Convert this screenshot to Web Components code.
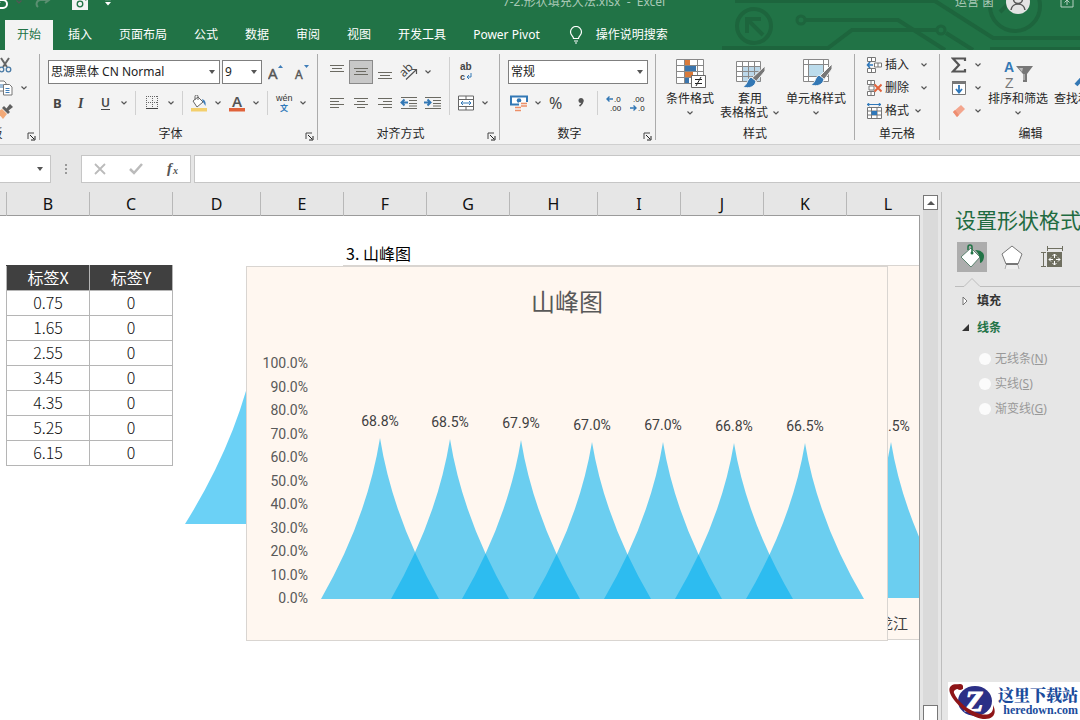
<!DOCTYPE html>
<html lang="zh-CN">
<head>
<meta charset="utf-8">
<title>7-2.形状填充大法.xlsx - Excel</title>
<style>
    body {
        margin: 0;
        height: 100vh;
        overflow: hidden;
        background: #e6e6e6;
        color: #262626;
        font: 12px/14px "Noto Sans", "Noto Sans CJK SC", sans-serif;
    }
</style>
</head>
<body>
<excel-app></excel-app>

<script>
// icon name -> [width, height, svg content]
const ICONS = {
    chevron: [8, 6, '<path d="M1.500 1.500 4 4l2.500-2.500" fill="none" stroke="#555" stroke-width="1.200"/>'],
    caret: [8, 6, '<path d="M1 1h6L4 5z" fill="#555"/>'],
    launcher: [9, 9, '<path d="M1 7V1h6" fill="none" stroke="#444"/><path d="M3 3l4 4M8 4v4H4" fill="none" stroke="#222"/>'],
    undo: [14, 14, '<path d="M4 1 1 5l4 3M2 5h6a4 4 0 0 1 0 8H5" fill="none" stroke="#fff" stroke-width="2"/>'],
    redo: [16, 14, '<path d="M11 1l3 4-4 3M14 5H6a4 4 0 0 0-3 7" fill="none" stroke="#5b8f71" stroke-width="2"/>'],
    camera: [16, 16, '<path d="M0 3h4l1-2h6l1 2h4v13H0z" fill="#f4f4f4"/><circle cx="8" cy="10" r="2.800" fill="none" stroke="#217346" stroke-width="1.300"/><path d="M13 6h1.500" stroke="#217346"/>'],
    customize: [8, 9, '<path d="M1 1.500h6" stroke="#fff" stroke-width="1.300"/><path d="M1 4h6L4 7.500z" fill="#fff"/>'],
    avatar: [24, 24, '<circle cx="12" cy="12" r="12" fill="#e3e3e3"/><circle cx="12" cy="9" r="4.500" fill="none" stroke="#555" stroke-width="1.500"/><path d="M5 20c1-8 13-8 14 0" fill="none" stroke="#555" stroke-width="1.500"/>'],
    ribbonMode: [14, 12, '<path d="M1 1h12v10H1zM7 9V4M4.500 6.500 7 4l2.500 2.500" fill="none" stroke="#b5d1c0"/>'],
    bulb: [14, 18, '<path d="M4.500 12.500c0-2.500-3-3-3-6.500a5.500 5.500 0 0 1 11 0c0 3.500-3 4-3 6.500zM5 15h4M6 17h2" fill="none" stroke="#fff" stroke-width="1.200"/>'],
    cut: [14, 16, '<path d="M3 1l6 9M11 1 5 10" stroke="#666" stroke-width="2"/><circle cx="3.500" cy="12.500" r="2.300" fill="none" stroke="#4a7ba6" stroke-width="1.300"/><circle cx="10.500" cy="12.500" r="2.300" fill="none" stroke="#4a7ba6" stroke-width="1.300"/>'],
    copy: [16, 16, '<path d="M1 1h6l2 2v8H1z" fill="#fff" stroke="#777"/><path d="M6.500 4.500h6l2.500 2.500v8H6.500z" fill="#fff" stroke="#777"/><path d="M3 5h3M3 7h3M8.500 8.500h4M8.500 10.500h4M8.500 12.500h4" stroke="#3f7db8"/>'],
    painter: [16, 16, '<path d="M0 9l5-3 5 5-4 5z" fill="#f2a977"/><path d="M5 5l2-2 6 6-2 2z" fill="#5f5f5f"/><path d="M9 6l4-5 3 3-5 4z" fill="#5f5f5f"/>'],
    grow: [16, 16, '<text x="0" y="15" font-family="Noto Sans" font-size="15" fill="#555" stroke="#555" stroke-width=".4">A</text><path d="M10 4h5l-2.500-3z" fill="#3f7db8"/>'],
    shrink: [16, 16, '<text x="1" y="15" font-family="Noto Sans" font-size="12" fill="#555" stroke="#555" stroke-width=".4">A</text><path d="M10 1h5l-2.500 3z" fill="#3f7db8"/>'],
    bold: [12, 14, '<text x="2" y="12" font-family="Noto Sans" font-weight="700" font-size="13" fill="#444">B</text>'],
    italic: [12, 14, '<text x="3" y="12" font-family="Liberation Serif" font-style="italic" font-weight="700" font-size="14" fill="#444">I</text>'],
    underline: [12, 16, '<text x="2" y="12" font-family="Noto Sans" font-weight="600" font-size="12" fill="#444">U</text><path d="M2 14.500h9" stroke="#444"/>'],
    borders: [14, 14, '<path d="M1.500 0v12M7.500 0v12M12.500 0v12M1 .5h12M1 6.500h12" stroke="#666" stroke-dasharray="1 1" fill="none"/><path d="M1 12.500h12" stroke="#444"/>'],
    fill: [18, 17, '<path d="M3 6l5-4 5 5-6 5z" fill="#fff" stroke="#666"/><path d="M5 5V1.500a1.500 1.500 0 0 1 3 0V5" fill="none" stroke="#666"/><path d="M12 4c3 1 4 3 3.500 7L13 7z" fill="#3f7db8"/><path d="M1 13h16v3.500H1z" fill="#f3cf6c"/>'],
    fontColor: [18, 17, '<text x="4" y="12" font-family="Noto Sans" font-weight="600" font-size="15" fill="#555">A</text><path d="M1 13h16v3.500H1z" fill="#e0623a"/>'],
    phonetic: [18, 20, '<text x="1" y="8" font-family="Liberation Sans" font-size="9" fill="#333">wén</text><text x="5" y="18" font-family="Noto Sans CJK SC" font-weight="700" font-size="8" fill="#2f78ba">文</text>'],
    alignTop: [16, 16, '<path d="M1 1.500h14M3 4.500h10M1 7.500h14" stroke="#6b6a62"/>'],
    alignMiddle: [16, 16, '<path d="M1 4.500h14M3 7.500h10M1 10.500h14" stroke="#6b6a62"/>'],
    alignBottom: [16, 16, '<path d="M1 8.500h14M3 11.500h10M1 14.500h14" stroke="#6b6a62"/>'],
    alignLeft: [16, 16, '<path d="M1 3.500h14M1 6.500h9M1 9.500h14M1 12.500h9" stroke="#6b6a62"/>'],
    alignCenter: [16, 16, '<path d="M1 3.500h14M4 6.500h8M1 9.500h14M4 12.500h8" stroke="#6b6a62"/>'],
    alignRight: [16, 16, '<path d="M1 3.500h14M6 6.500h9M1 9.500h14M6 12.500h9" stroke="#6b6a62"/>'],
    orient: [18, 18, '<text transform="rotate(-45 8 9)" x="1" y="10" font-family="Noto Sans" font-size="12" fill="#444">ab</text><path d="M6 16.500 16 7M12 6.500h4.500V11" fill="none" stroke="#555" stroke-width="1.200"/>'],
    outdent: [18, 16, '<path d="M1 2.500h16M9 5.500h8M9 8.500h8M1 13.500h16M9 11h8" stroke="#6b6a62"/><path d="M8 7.500H2M4.500 4.500l-3 3 3 3" fill="none" stroke="#3378b5" stroke-width="2"/>'],
    indent: [18, 16, '<path d="M1 2.500h16M9 5.500h8M9 8.500h8M1 13.500h16M9 11h8" stroke="#6b6a62"/><path d="M0 7.500h6M3.500 4.500l3 3-3 3" fill="none" stroke="#3378b5" stroke-width="2"/>'],
    wrap: [14, 20, '<text x="1" y="8" font-family="Liberation Sans" font-weight="700" font-size="10" fill="#444">ab</text><text x="1" y="18" font-family="Liberation Sans" font-weight="700" font-size="9" fill="#444">c</text><path d="M12 11v4H8M10 13l-2 2 2 2" fill="none" stroke="#3378b5"/>'],
    merge: [16, 16, '<path d="M.5 1h15v14H.5zM.5 4.500h15M.5 11.500h15M8 1v3.500M8 11.500V15" fill="#fff" stroke="#666"/><path d="M3 8h10M5 6 3 8l2 2M11 6l2 2-2 2" fill="none" stroke="#3378b5"/>'],
    currency: [18, 17, '<path d="M1 1.500h16v8H1z" fill="#fff" stroke="#3378b5" stroke-width="2"/><circle cx="9" cy="5.500" r="2.300" fill="#3378b5"/><path d="M9 7h9v5H9zM4 11h8v6H4z" fill="#f6f6f6"/><path d="M11 8.500h6M11 11h6M5 12.500h6M5 15.500h6" stroke="#ec8f68" stroke-width="1.600"/>'],
    percent: [16, 16, '<text x="0" y="14" font-family="Noto Sans" font-size="16" fill="#444">%</text>'],
    comma: [10, 16, '<circle cx="5" cy="5.500" r="2.500" fill="#555"/><path d="M6.500 5c.500 3-1 4.500-3 6" fill="none" stroke="#555" stroke-width="1.800"/>'],
    moreDigits: [18, 18, '<text x="9" y="8" font-family="Liberation Sans" font-size="8" fill="#222">.0</text><text x="5" y="17" font-family="Liberation Sans" font-size="8" fill="#222">.00</text><path d="M8 5H2M4.500 2.500 2 5l2.500 2.500" fill="none" stroke="#3378b5" stroke-width="1.400"/>'],
    lessDigits: [18, 18, '<text x="4" y="8" font-family="Liberation Sans" font-size="8" fill="#222">.00</text><text x="9" y="17" font-family="Liberation Sans" font-size="8" fill="#222">.0</text><path d="M1 14h6M4.500 11.500 7 14l-2.500 2.500" fill="none" stroke="#3378b5" stroke-width="1.400"/>'],
    conditional: [32, 32, '<path d="M2.500 2.500h27v24h-27z" fill="#fff"/><path d="M11 3h5v6h-5zM11 15h8v6h-8z" fill="#d97a3a"/><path d="M11 9h11v6H11zM11 21h4v6h-4z" fill="#3a75ad"/><path d="M2.500 2.500h27v24h-27zM2.500 8.500h27M2.500 14.500h27M2.500 20.500h27M10.500 2.500v24M23.500 2.500v24" fill="none" stroke="#888"/><path d="M17.500 18.500h14v12h-14z" fill="#fff" stroke="#666"/><path d="M21 22.500h7M21 26.500h7M27 20l-5 9" stroke="#222"/>'],
    tableStyle: [32, 32, '<path d="M2.500 4.500h24v20h-24z" fill="#fff"/><path d="M9 10h18v15H9z" fill="#bcd8ea"/><path d="M2.500 4.500h24v20h-24zM2.500 9.500h24M2.500 14.500h24M2.500 19.500h24M8.500 4.500v20M14.500 4.500v20M20.500 4.500v20" fill="none" stroke="#888"/><path d="M31 9 17 22l4 4 10-12z" fill="#777" stroke="#f3f3f3"/><path d="M17 20c-4 2-3 7-8 10 6 2 12 0 13-6z" fill="#3378b5" stroke="#f3f3f3"/>'],
    cellStyle: [32, 32, '<path d="M3.500 2.500h25v22h-25z" fill="#fff"/><path d="M8 8h16v11H8z" fill="#bcdcec"/><path d="M3.500 2.500h25v22h-25zM3.500 7.500h25M3.500 19.500h25M8.500 2.500v22M23.500 2.500v22" fill="none" stroke="#888"/><path d="M32 7 19 20l4 4 9-12z" fill="#777" stroke="#f3f3f3"/><path d="M19 18c-4 2-3 7-8 10 6 2 12 0 13-6z" fill="#3378b5" stroke="#f3f3f3"/>'],
    insertCell: [16, 16, '<path d="M1.500.5h8v4h-8zM1.500 11.500h8v4h-8zM5.500.5v4M5.500 11.500v4M8.500 6h7v4h-7zM12 6v4" fill="#fff" stroke="#777"/><path d="M7 8H2M4 5 1.500 8 4 11" fill="none" stroke="#2f78ba" stroke-width="1.600"/>'],
    deleteCell: [16, 16, '<path d="M1.500.5h7v4h-7zM1.500 11.500h7v4h-7zM5 .5v4M5 11.500v4M3 6h5v4H3z" fill="#fff" stroke="#777"/><path d="M8.500 4.500l7 7M15.500 4.500l-7 7" stroke="#e2643c" stroke-width="2"/>'],
    formatCell: [16, 16, '<path d="M1 1.500h14M3.500 0 1 1.500 3.500 3M12.500 0 15 1.500 12.500 3" fill="none" stroke="#2f78ba"/><path d="M1.500 4.500h14v11h-14zM1.500 8h14M1.500 12h14M5.500 4.500v11M11 4.500v11" fill="#fff" stroke="#777"/><path d="M5.500 8H11v4H5.500z" fill="#2f78ba"/>'],
    sum: [16, 16, '<path d="M14 4V1.500H2L8 8l-6 6.500h12V12" fill="none" stroke="#555" stroke-width="2.200"/>'],
    fillDown: [16, 16, '<path d="M1.500 1.500h13v13h-13z" fill="#fff" stroke="#777"/><path d="M1 1h14v3H1z" fill="#777"/><path d="M8 5v7M5 9l3 3.500L11 9" fill="none" stroke="#2f78ba" stroke-width="1.800"/>'],
    eraser: [16, 16, '<path d="M2 9l8-7 4 4-8 8z" fill="#f3a58d"/><path d="M2 9l2-2 4 5-2 2z" fill="#ee8d70"/>'],
    sort: [32, 32, '<text x="2" y="15" font-family="Liberation Sans" font-weight="700" font-size="14" fill="#3378b5">A</text><text x="3" y="31" font-family="Liberation Sans" font-size="14" fill="#777">Z</text><path d="M14 9h17l-6 8v8h-4v-8z" fill="#777"/><path d="M17 11h4l-1 4z" fill="#bbb"/><path d="M22 17v6" stroke="#ddd"/>'],
    find: [32, 32, '<circle cx="24" cy="11" r="8" fill="#fff" stroke="#3378b5" stroke-width="2.500"/><path d="M18 17 8 28" stroke="#3378b5" stroke-width="4"/>'],
    cancel: [12, 12, '<path d="M1 1l10 10M11 1 1 11" stroke="#bbb" stroke-width="1.800"/>'],
    accept: [14, 12, '<path d="M1 6l4 4 8-9" fill="none" stroke="#bbb" stroke-width="2.500"/>'],
    fx: [16, 16, '<text x="3" y="12" font-family="Liberation Serif" font-style="italic" font-weight="700" font-size="15" fill="#555">f</text><text x="9" y="13" font-family="Liberation Serif" font-style="italic" font-weight="700" font-size="10" fill="#555">x</text>'],
    dots: [4, 14, '<path d="M2 2v2M2 6v2M2 10v2" stroke="#999" stroke-width="2"/>'],
    up: [10, 6, '<path d="M1 5l4-4 4 4z" fill="#555"/>'],
    paneFill: [30, 30, '<path d="M4 15l10-9 9 9-9 10z" fill="#fff" stroke="#3f6f57" stroke-width=".8"/><path d="M11 8V5a1.500 1.500 0 0 1 4 0v6" fill="none" stroke="#217346" stroke-width="1.500"/><circle cx="15" cy="11" r="1.500" fill="#217346"/><path d="M18 8c6 0 9 3 9 6 0 4-2 7-4 7 0-4 0-9-5-13z" fill="#217346"/>'],
    paneEffect: [30, 30, '<path d="M15 4l10 8-4 10H9L5 12z" fill="#fff" stroke="#777"/><path d="M8 23h14l1 4H7z" fill="#eee"/><path d="M9 22h12" stroke="#777" stroke-width="2"/><path d="M9 23l-1 4M21 23l1 4" stroke="#aaa"/>'],
    paneSize: [30, 30, '<path d="M10 10h15v15H10z" fill="#6f6f60"/><path d="M10 6.500h15M10.500 4v5M25.500 4v5M6.500 10v15M4 10.500h5M4 24.500h5" stroke="#6f6f60" fill="none"/><path d="M17.500 12v11M12 17.500h11" stroke="#fff" stroke-dasharray="4 3"/><path d="M15.500 14l2-2 2 2M15.500 21l2 2 2-2M14 15.500l-2 2 2 2M21 15.500l2 2-2 2" fill="none" stroke="#fff"/>'],
    closed: [6, 10, '<path d="M1 1l4 4-4 4z" fill="#fff" stroke="#777"/>'],
    open: [8, 8, '<path d="M7 0v7H0z" fill="#333"/>']
};

class AppIcon extends HTMLElement {
    constructor() {
        super();
        this.attachShadow({ mode: 'open' });
        const [w, h, body] = ICONS[this.getAttribute('name')];
        this.shadowRoot.innerHTML = `
        <style>
            :host { display: inline-flex; flex: none; }
            svg { display: block; }
        </style>
        <svg width="${w}" height="${h}" viewBox="0 0 ${w} ${h}" aria-hidden="true">${body}</svg>`;
    }
}

// icon button: 24px square, or a narrow arrow with the "drop" attribute
class ToolButton extends HTMLElement {
    constructor() {
        super();
        this.attachShadow({ mode: 'open' });
        const icon = this.getAttribute('icon') || 'chevron';
        this.shadowRoot.innerHTML = `
        <style>
            :host { display: block; flex: none; width: 24px; height: 24px; }
            :host([drop]) { width: 14px; }
            button {
                display: flex;
                align-items: center;
                justify-content: center;
                width: 100%;
                height: 100%;
                padding: 0;
                border: 1px solid transparent;
                background: none;
                box-sizing: border-box;
            }
            button:hover { background: #dcdcdc; }
            :host([pressed]) button { background: #c8c8c8; border-color: #8a8a8a; }
        </style>
        <button type="button" aria-label="${this.getAttribute('label')}"><app-icon name="${icon}"></app-icon></button>`;
    }
}

// icon over a caption; caption lines come from the slot
class BigButton extends HTMLElement {
    constructor() {
        super();
        this.attachShadow({ mode: 'open' });
        this.shadowRoot.innerHTML = `
        <style>
            :host { display: block; flex: none; }
            button {
                display: flex;
                flex-direction: column;
                align-items: center;
                gap: 3px;
                padding: 0 3px;
                border: 0;
                background: none;
                font: inherit;
                color: inherit;
                white-space: nowrap;
            }
            .more { display: flex; align-items: center; gap: 4px; height: 14px; }
            .text { display: flex; flex-direction: column; align-items: center; }
        </style>
        <button type="button">
            <app-icon name="${this.getAttribute('icon')}"></app-icon>
            <span class="text">
                <span><slot></slot></span>
                <span class="more"><slot name="second"></slot><app-icon name="chevron"></app-icon></span>
            </span>
        </button>`;
    }
}

class RowButton extends HTMLElement {
    constructor() {
        super();
        this.attachShadow({ mode: 'open' });
        this.shadowRoot.innerHTML = `
        <style>
            :host { display: block; }
            button {
                display: flex;
                align-items: center;
                gap: 3px;
                height: 23px;
                padding: 0;
                border: 0;
                background: none;
                font: inherit;
                color: inherit;
            }
            .arrow { margin-left: var(--arrow-gap, 8px); }
        </style>
        <button type="button">
            <app-icon name="${this.getAttribute('icon')}"></app-icon>
            <slot></slot>
            <app-icon class="arrow" name="chevron"></app-icon>
        </button>`;
    }
}

class ComboBox extends HTMLElement {
    constructor() {
        super();
        this.attachShadow({ mode: 'open' });
        this.shadowRoot.innerHTML = `
        <style>
            :host {
                display: flex;
                align-items: center;
                height: 24px;
                padding-right: 3px;
                box-sizing: border-box;
                border: 1px solid #7f7f7f;
                background: #fff;
            }
            select {
                flex: 1;
                min-width: 0;
                height: 100%;
                padding: 0 2px;
                border: 0;
                appearance: none;
                background: none;
                color: #222;
                font: inherit;
            }
        </style>
        <select aria-label="${this.getAttribute('label')}"><option>${this.getAttribute('value')}</option></select>
        <app-icon name="caret"></app-icon>`;
    }
}

class RibbonGroup extends HTMLElement {
    constructor() {
        super();
        this.attachShadow({ mode: 'open' });
        const launcher = this.hasAttribute('launcher')
            ? `<button type="button" aria-label="${this.getAttribute('label')}设置"><app-icon name="launcher"></app-icon></button>` : '';
        this.shadowRoot.innerHTML = `
        <style>
            :host {
                display: flex;
                flex-direction: column;
                justify-content: space-between;
                flex: none;
                box-sizing: border-box;
                border-right: 1px solid #ababab;
            }
            .body { display: flex; padding-top: 3px; }
            footer { display: flex; align-items: center; height: 12px; }
            footer span { flex: 1; text-align: center; }
            button { display: flex; width: 16px; padding: 4px 0 0 4px; border: 0; background: none; box-sizing: border-box; }
        </style>
        <div class="body"><slot></slot></div>
        <footer><span>${this.getAttribute('label')}</span>${launcher}</footer>`;
    }
}

class TitleBar extends HTMLElement {
    constructor() {
        super();
        this.attachShadow({ mode: 'open' });
        this.shadowRoot.innerHTML = `
        <style>
            :host {
                display: flex;
                align-items: center;
                height: 32px;
                margin-top: -14px;
                color: #a9c9b6;
                white-space: pre;
            }
            .quick { display: flex; align-items: center; width: 213px; box-sizing: border-box; }
            .quick :first-child { margin-left: -5px; }
            .quick :nth-child(2) { margin: 0 12px 0 6px; }
            .quick :nth-child(4) { margin: 0 16px 0 21px; }
            .name { flex: 1; text-align: center; }
            .user { display: flex; align-items: center; gap: 12px; width: 125px; }
            .user :last-child { margin-left: 18px; }
        </style>
        <div class="quick">
            <app-icon name="undo"></app-icon><app-icon name="chevron"></app-icon>
            <app-icon name="redo"></app-icon><app-icon name="camera"></app-icon>
            <app-icon name="customize"></app-icon>
        </div>
        <div class="name">7-2.形状填充大法.xlsx  -  Excel</div>
        <div class="user"><span>运营 菌</span><app-icon name="avatar"></app-icon><app-icon name="ribbonMode"></app-icon></div>`;
    }
}

class RibbonTabs extends HTMLElement {
    constructor() {
        super();
        this.attachShadow({ mode: 'open' });
        const tabs = ['开始', '插入', '页面布局', '公式', '数据', '审阅', '视图', '开发工具', 'Power Pivot'];
        this.shadowRoot.innerHTML = `
        <style>
            :host { display: flex; gap: 3px; height: 30px; margin-top: 2px; padding-left: 5px; }
            a {
                display: flex;
                align-items: center;
                padding: 0 12px;
                color: #fff;
                text-decoration: none;
                white-space: nowrap;
            }
            a.active { background: #f3f3f3; color: #217346; }
            a.tell { gap: 13px; margin-left: 2px; }
        </style>
        ${tabs.map((t, i) => `<a href="#"${i === 0 ? ' class="active"' : ''}>${t}</a>`).join('')}
        <a class="tell" href="#"><app-icon name="bulb"></app-icon>操作说明搜索</a>`;
    }
}

class AppHeader extends HTMLElement {
    constructor() {
        super();
        this.attachShadow({ mode: 'open' });
        this.shadowRoot.innerHTML = `
        <style>
            :host { display: flow-root; position: relative; overflow: hidden; background: #217346; }
            /* circuit drawing lies behind the texts */
            .art { position: absolute; right: 0; top: 0; }
            title-bar, ribbon-tabs { position: relative; }
        </style>
        <svg class="art" width="360" height="50" viewBox="720 0 360 50" fill="none" stroke="#1d653d" stroke-width="4" aria-hidden="true">
            <circle cx="754" cy="26" r="17"/>
            <path d="M763 35l-15-15M747 33V19h14"/>
            <circle cx="801" cy="20" r="4" stroke-width="3"/>
            <path d="M806 20h92l47 30"/>
            <circle cx="941" cy="30" r="4" stroke-width="3"/>
            <path d="M936 30h-84l-24 18H722M946 33l27 17"/>
            <path d="M735 1h200l58 37h90"/>
            <circle cx="1015" cy="6" r="25"/>
            <path d="M990 49h90M1000 12l8-8"/>
        </svg>
        <title-bar></title-bar>
        <ribbon-tabs></ribbon-tabs>`;
    }
}

class RibbonBar extends HTMLElement {
    constructor() {
        super();
        this.attachShadow({ mode: 'open' });
        this.shadowRoot.innerHTML = `
        <style>
            :host {
                display: flex;
                height: 86px;
                padding: 4px 0;
                overflow: hidden;
                background: #f3f3f3;
                border-bottom: 1px solid #cfcfcf;
            }
            .rows { display: flex; flex-direction: column; gap: 7px; padding-top: 3px; }
            .row { display: flex; align-items: center; }
            .stack { display: flex; flex-direction: column; margin-top: -4px; }
            .stack .row { height: 23px; }
            .stack row-button:last-child { --arrow-gap: 2px; }
            i { flex: none; width: 1px; margin: 0 4px; background: #d0d0d0; align-self: stretch; }
            .clip { width: 94px; margin-left: -54px; }
            .clip .stack { margin-left: 47px; }
            .font { width: 278px; }
            .font .rows { padding-left: 5px; }
            .font .row:first-child { gap: 2px; padding-left: 3px; }
            .align { width: 182px; }
            .align .rows { padding-left: 7px; width: 120px; }
            .align i + .rows { padding-left: 0; width: auto; }
            .number { width: 156px; }
            .number .rows { padding-left: 7px; }
            .number .row:first-child { padding-left: 1px; }
            .styles { width: 199px; }
            .styles big-button:first-of-type { margin-left: 7px; }
            .cells { width: 85px; }
            .cells .stack { margin-left: 11px; }
            .edit { width: 182px; }
            .edit .stack { margin-left: 7px; }
            .name { width: 172px; }
            .size { width: 40px; }
            .format { width: 140px; }
        </style>
        <ribbon-group class="clip" label="剪贴板" launcher>
            <div class="stack">
                <div class="row"><tool-button icon="cut" label="剪切"></tool-button></div>
                <div class="row"><tool-button icon="copy" label="复制"></tool-button><tool-button drop label="复制选项"></tool-button></div>
                <div class="row"><tool-button icon="painter" label="格式刷"></tool-button></div>
            </div>
        </ribbon-group>
        <ribbon-group class="font" label="字体" launcher>
            <div class="rows">
                <div class="row">
                    <combo-box class="name" label="字体" value="思源黑体 CN Normal"></combo-box>
                    <combo-box class="size" label="字号" value="9"></combo-box>
                    <tool-button icon="grow" label="增大字号"></tool-button>
                    <tool-button icon="shrink" label="减小字号"></tool-button>
                </div>
                <div class="row">
                    <tool-button icon="bold" label="加粗"></tool-button>
                    <tool-button icon="italic" label="倾斜"></tool-button>
                    <tool-button icon="underline" label="下划线"></tool-button>
                    <tool-button drop label="下划线选项"></tool-button><i></i>
                    <tool-button icon="borders" label="边框"></tool-button>
                    <tool-button drop label="边框选项"></tool-button><i></i>
                    <tool-button icon="fill" label="填充颜色"></tool-button>
                    <tool-button drop label="填充颜色选项"></tool-button>
                    <tool-button icon="fontColor" label="字体颜色"></tool-button>
                    <tool-button drop label="字体颜色选项"></tool-button><i></i>
                    <tool-button icon="phonetic" label="拼音"></tool-button>
                    <tool-button drop label="拼音选项"></tool-button>
                </div>
            </div>
        </ribbon-group>
        <ribbon-group class="align" label="对齐方式" launcher>
            <div class="rows">
                <div class="row">
                    <tool-button icon="alignTop" label="顶端对齐"></tool-button>
                    <tool-button pressed icon="alignMiddle" label="垂直居中"></tool-button>
                    <tool-button icon="alignBottom" label="底端对齐"></tool-button>
                    <tool-button icon="orient" label="方向"></tool-button>
                    <tool-button drop label="方向选项"></tool-button>
                </div>
                <div class="row">
                    <tool-button icon="alignLeft" label="左对齐"></tool-button>
                    <tool-button icon="alignCenter" label="居中"></tool-button>
                    <tool-button icon="alignRight" label="右对齐"></tool-button>
                    <tool-button icon="outdent" label="减少缩进量"></tool-button>
                    <tool-button icon="indent" label="增加缩进量"></tool-button>
                </div>
            </div>
            <i></i>
            <div class="rows">
                <div class="row"><tool-button icon="wrap" label="自动换行"></tool-button></div>
                <div class="row"><tool-button icon="merge" label="合并后居中"></tool-button><tool-button drop label="合并选项"></tool-button></div>
            </div>
        </ribbon-group>
        <ribbon-group class="number" label="数字" launcher>
            <div class="rows">
                <div class="row"><combo-box class="format" label="数字格式" value="常规"></combo-box></div>
                <div class="row">
                    <tool-button icon="currency" label="会计数字格式"></tool-button>
                    <tool-button drop label="货币选项"></tool-button>
                    <tool-button icon="percent" label="百分比样式"></tool-button>
                    <tool-button icon="comma" label="千位分隔样式"></tool-button><i></i>
                    <tool-button icon="moreDigits" label="增加小数位数"></tool-button>
                    <tool-button icon="lessDigits" label="减少小数位数"></tool-button>
                </div>
            </div>
        </ribbon-group>
        <ribbon-group class="styles" label="样式">
            <big-button icon="conditional">条件格式</big-button>
            <big-button icon="tableStyle">套用<span slot="second">表格格式</span></big-button>
            <big-button icon="cellStyle">单元格样式</big-button>
        </ribbon-group>
        <ribbon-group class="cells" label="单元格">
            <div class="stack">
                <row-button icon="insertCell">插入</row-button>
                <row-button icon="deleteCell">删除</row-button>
                <row-button icon="formatCell">格式</row-button>
            </div>
        </ribbon-group>
        <ribbon-group class="edit" label="编辑">
            <div class="stack">
                <div class="row"><tool-button icon="sum" label="自动求和"></tool-button><tool-button drop label="求和选项"></tool-button></div>
                <div class="row"><tool-button icon="fillDown" label="填充"></tool-button><tool-button drop label="填充选项"></tool-button></div>
                <div class="row"><tool-button icon="eraser" label="清除"></tool-button><tool-button drop label="清除选项"></tool-button></div>
            </div>
            <big-button icon="sort">排序和筛选</big-button>
            <big-button icon="find">查找和选择</big-button>
        </ribbon-group>`;
    }
}

class FormulaBar extends HTMLElement {
    constructor() {
        super();
        this.attachShadow({ mode: 'open' });
        this.shadowRoot.innerHTML = `
        <style>
            :host { display: flex; align-items: center; height: 28px; padding: 10px 0 9px; }
            div, .formula {
                display: flex;
                align-items: center;
                height: 28px;
                box-sizing: border-box;
                border: 1px solid #c6c6c6;
                background: #fff;
            }
            input { min-width: 0; padding: 0 4px; border: 0; background: none; font: inherit; }
            .cell { width: 51px; border-left: 0; }
            .cell input { flex: 1; }
            .cell tool-button { margin-right: 3px; }
            app-icon { margin: 0 13px; }
            .keys { width: 110px; justify-content: space-around; margin-right: 3px; }
            .formula { flex: 1; border-right: 0; }
        </style>
        <div class="cell"><input type="text" aria-label="名称框"><tool-button drop icon="caret" label="名称列表"></tool-button></div>
        <app-icon name="dots"></app-icon>
        <div class="keys">
            <tool-button icon="cancel" label="取消"></tool-button>
            <tool-button icon="accept" label="输入"></tool-button>
            <tool-button icon="fx" label="插入函数"></tool-button>
        </div>
        <input class="formula" type="text" aria-label="编辑栏">`;
    }
}

// peak: tip at (x, y), standing on base, half wide at the foot
function peak(x, y, base, half) {
    const h = (base - y) / 2;
    const c = half * 0.22;
    return `<path d="M${x} ${y}Q${x + c} ${y + h} ${x + half} ${base}H${x - half}Q${x - c} ${y + h} ${x} ${y}z"/>`;
}

class PeakChart extends HTMLElement {
    constructor() {
        super();
        this.attachShadow({ mode: 'open' });
        const values = [68.8, 68.5, 67.9, 67, 67, 66.8, 66.5];
        const base = 332;
        const top = v => Math.round(base - v * 2.34);
        const x = i => 133 + i * 71 - (i ? 1 : 0);
        const axis = [];
        for (let p = 0; p <= 100; p += 10) {
            axis.push(`<text x="61" y="${Math.round(336 - p * 2.35)}" text-anchor="end">${p.toFixed(1)}%</text>`);
        }
        this.shadowRoot.innerHTML = `
        <style>
            :host { display: block; box-sizing: border-box; border: 1px solid #d9d5d1; background: #fff7f0; }
            svg { display: block; font: 14px Roboto, sans-serif; fill: #595959; }
            .title { font: 24px "Noto Sans CJK SC", sans-serif; }
            .peaks { fill: #00b0f0; fill-opacity: .58; }
            .values { fill: #404040; }
        </style>
        <svg width="640" height="373" viewBox="0 0 640 373">
            <text class="title" x="320" y="44" text-anchor="middle">山峰图</text>
            <g>${axis.join('')}</g>
            <g class="peaks">${values.map((v, i) => peak(x(i), top(v), base, 59)).join('')}</g>
            <g class="values" text-anchor="middle">
                ${values.map((v, i) => `<text x="${x(i)}" y="${top(v) - 12}">${v.toFixed(1)}%</text>`).join('')}
            </g>
        </svg>`;
    }
}

class LabelTable extends HTMLElement {
    constructor() {
        super();
        this.attachShadow({ mode: 'open' });
        const rows = ['0.75', '1.65', '2.55', '3.45', '4.35', '5.25', '6.15'];
        this.shadowRoot.innerHTML = `
        <style>
            :host { display: block; font: 16px/22px "Noto Sans CJK SC", sans-serif; color: #111; }
            table { width: 167px; border-collapse: collapse; table-layout: fixed; }
            th, td { height: 24px; padding: 0; border: 1px solid #b5b5b5; text-align: center; vertical-align: top; font-weight: 300; }
            th { background: #404040; color: #fff; font-weight: 400; border-top-color: #404040; }
        </style>
        <table>
            <tr><th>标签X</th><th>标签Y</th></tr>
            ${rows.map(r => `<tr><td>${r}</td><td>0</td></tr>`).join('')}
        </table>`;
    }
}

class SheetView extends HTMLElement {
    constructor() {
        super();
        this.attachShadow({ mode: 'open' });
        const names = ['', ...'BCDEFGHIJKL'];
        this.shadowRoot.innerHTML = `
        <style>
            :host {
                --cols: 7px 83px 83px 88px 83px 83px 83px 88px 83px 83px 83px 83px;
                display: flex;
                flex-direction: column;
                min-width: 0;
                overflow: hidden;
            }
            .heads {
                display: grid;
                grid-template-columns: var(--cols);
                flex: none;
                height: 23px;
                border-bottom: 1px solid #9b9b9b;
                font-size: 16px;
                line-height: 24px;
                text-align: center;
                color: #111;
            }
            .heads span { border-right: 1px solid #b8b8b8; }
            .cells {
                position: relative;
                flex: 1;
                display: grid;
                grid-template-columns: var(--cols);
                grid-template-rows: 24px 25px;
                grid-auto-rows: 25px;
                overflow: hidden;
                background: #fff;
                border-right: 1px solid #9b9b9b;
                font: 16px/27px "Noto Sans CJK SC", sans-serif;
                color: #000;
            }
            .note { grid-area: 2 / 6 / 3 / 8; padding-left: 2px; }
            label-table { grid-area: 3 / 2 / 11 / 4; margin-left: -1px; }
            /* charts and shapes float over the cells */
            .shape, .back, peak-chart { position: absolute; }
            .shape { left: 185px; top: 128px; }
            .back { left: 343px; top: 49px; }
            peak-chart { left: 246px; top: 50px; width: 642px; height: 375px; }
            svg { fill: #00b0f0; fill-opacity: .58; }
            svg text { fill: #404040; fill-opacity: 1; font: 14px Roboto, sans-serif; }
            svg .place { font: 15px "Noto Sans CJK SC", sans-serif; }
        </style>
        <div class="heads">${names.map(n => `<span>${n}</span>`).join('')}</div>
        <div class="cells">
            <div class="note">3. 山峰图</div>
            <label-table></label-table>
            <svg class="shape" width="144" height="180">${peak(72, 0, 180, 72)}</svg>
            <svg class="back" width="660" height="375">
                <rect x=".5" y=".5" width="659" height="374" fill="#fff7f0" fill-opacity="1" stroke="#d9d5d1"/>
                ${peak(548, 177, 333, 59)}
                <text x="548" y="166" text-anchor="middle">66.5%</text>
                <text class="place" x="565" y="364" text-anchor="end">黑龙江</text>
            </svg>
            <peak-chart></peak-chart>
        </div>`;
    }
}

class ScrollColumn extends HTMLElement {
    constructor() {
        super();
        this.attachShadow({ mode: 'open' });
        this.shadowRoot.innerHTML = `
        <style>
            :host { display: flex; flex-direction: column; padding: 3px 3px 0; border-right: 1px solid #bdbdbd; }
            button { width: 15px; height: 15px; padding: 0; border: 1px solid #777; background: #fff; display: flex; align-items: center; justify-content: center; }
            .track { flex: 1; display: flex; align-items: flex-end; background: #dadada; }
            .thumb { width: 15px; height: 15px; box-sizing: border-box; border: 1px solid #777; border-bottom: 0; background: #fff; }
        </style>
        <button type="button" aria-label="向上滚动"><app-icon name="up"></app-icon></button>
        <div class="track"><div class="thumb"></div></div>`;
    }
}

class SiteMark extends HTMLElement {
    constructor() {
        super();
        this.attachShadow({ mode: 'open' });
        this.shadowRoot.innerHTML = `
        <style>
            :host { display: flex; align-items: center; gap: 2px; height: 38px; background: #fff; white-space: nowrap; }
            svg { flex: none; }
            div { display: flex; flex-direction: column; align-items: flex-end; color: #1b4c9c; }
            b { font: 900 16px/18px "Noto Serif CJK SC", "Noto Sans CJK SC", serif; }
            span { font: 700 12px/12px "Liberation Serif", serif; }
        </style>
        <svg width="48" height="38" viewBox="0 0 48 38" aria-hidden="true">
            <ellipse cx="27" cy="19" rx="17" ry="15" fill="#2b2f86"/>
            <text x="17" y="29" font-family="Liberation Serif" font-weight="700" font-style="italic" font-size="30" fill="#fff" stroke="#fff">Z</text>
            <path d="M15 4C7 0-1 3 2 11c4 10 19 24 33 26 11 1 14-6 10-14 1 8-4 11-13 9C21 29 9 19 6 11c-1-3 3-5 9-4z" fill="#8e1518"/>
            <circle cx="12" cy="5" r="3" fill="#8e1518"/>
        </svg>
        <div><b>这里下载站</b><span>heredown.com</span></div>`;
    }
}

class FormatPane extends HTMLElement {
    constructor() {
        super();
        this.attachShadow({ mode: 'open' });
        const lines = [['无线条', 'N'], ['实线', 'S'], ['渐变线', 'G']];
        this.shadowRoot.innerHTML = `
        <style>
            :host { display: flex; flex-direction: column; overflow: hidden; padding-left: 6px; }
            h2 { margin: 14px 0 0 7px; font-size: 21px; line-height: 28px; font-weight: 400; color: #1f6b41; white-space: nowrap; }
            nav { display: flex; gap: 10px; margin: 8px 0 0 9px; }
            nav button { width: 30px; height: 30px; padding: 0; border: 0; background: none; }
            nav button.on { background: #adadad; }
            .notch { display: block; height: 9px; margin: 6px 0 0 7px; overflow: hidden; }
            .head { display: flex; align-items: center; width: 100%; height: 27px; padding: 0 0 0 14px; border: 0; background: none; font: inherit; font-weight: 700; color: #333; }
            .head span { width: 15px; display: flex; }
            .head.open { color: #217346; }
            .list { margin: 5px 0 0 31px; }
            label { display: flex; align-items: center; gap: 4px; height: 25px; color: #999; white-space: nowrap; }
            input { appearance: none; width: 12px; height: 12px; margin: 0; border-radius: 50%; background: #fbfbfb; }
            site-mark { margin-top: auto; }
        </style>
        <h2>设置形状格式</h2>
        <nav>
            <button class="on" type="button" aria-label="填充与线条"><app-icon name="paneFill"></app-icon></button>
            <button type="button" aria-label="效果"><app-icon name="paneEffect"></app-icon></button>
            <button type="button" aria-label="大小与属性"><app-icon name="paneSize"></app-icon></button>
        </nav>
        <svg class="notch" width="400" height="9" fill="none" stroke="#bdbdbd" aria-hidden="true"><path d="M0 8.500h9l8-8 8 8h400"/></svg>
        <button class="head" type="button"><span><app-icon name="closed"></app-icon></span>填充</button>
        <button class="head open" type="button"><span><app-icon name="open"></app-icon></span>线条</button>
        <div class="list">
            ${lines.map(([t, k]) => `<label><input type="radio" name="line" disabled><span>${t}(<u>${k}</u>)</span></label>`).join('')}
        </div>
        <site-mark></site-mark>`;
    }
}

class ExcelApp extends HTMLElement {
    constructor() {
        super();
        this.attachShadow({ mode: 'open' });
        this.shadowRoot.innerHTML = `
        <style>
            :host { display: flex; flex-direction: column; height: 100vh; }
            app-header, ribbon-bar, formula-bar { flex: none; }
            main { flex: 1; min-height: 0; display: grid; grid-template-columns: minmax(0, 1fr) auto 138px; }
        </style>
        <app-header></app-header>
        <ribbon-bar></ribbon-bar>
        <formula-bar></formula-bar>
        <main>
            <sheet-view></sheet-view>
            <scroll-column></scroll-column>
            <format-pane></format-pane>
        </main>`;
    }
}

customElements.define('app-icon', AppIcon);
customElements.define('tool-button', ToolButton);
customElements.define('big-button', BigButton);
customElements.define('row-button', RowButton);
customElements.define('combo-box', ComboBox);
customElements.define('ribbon-group', RibbonGroup);
customElements.define('title-bar', TitleBar);
customElements.define('ribbon-tabs', RibbonTabs);
customElements.define('app-header', AppHeader);
customElements.define('ribbon-bar', RibbonBar);
customElements.define('formula-bar', FormulaBar);
customElements.define('peak-chart', PeakChart);
customElements.define('label-table', LabelTable);
customElements.define('sheet-view', SheetView);
customElements.define('scroll-column', ScrollColumn);
customElements.define('site-mark', SiteMark);
customElements.define('format-pane', FormatPane);
customElements.define('excel-app', ExcelApp);
</script>
</body>
</html>
